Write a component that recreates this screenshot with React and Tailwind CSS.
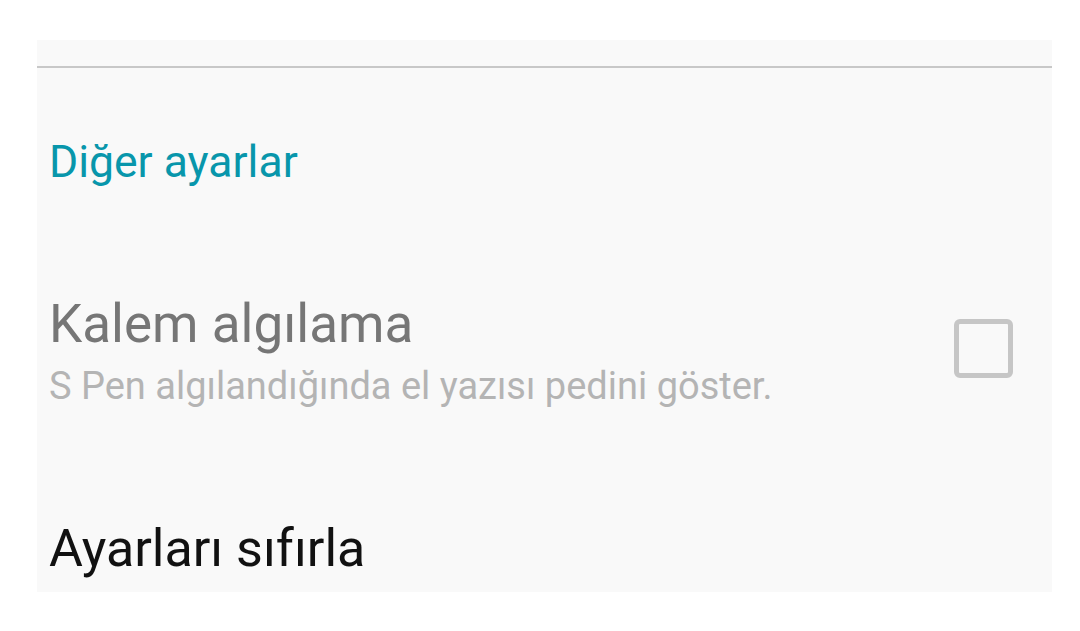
export default function App() {
  return (
    <div className="h-[631px] w-[1080px] bg-white pt-[40px] font-['Roboto',sans-serif]">
      <div className="ml-[37px] h-[552px] w-[1015px] overflow-hidden bg-[#f9f9f9]">
        <div className="h-[26px]" />
        <div className="h-[2px] bg-[#c8c8c8]" />

        <div className="pl-[12px] pt-[72px]">
          <div className="text-[44.5px] leading-[44px] text-[#0896ab]">Diğer ayarlar</div>
        </div>

        <div className="mt-[114px] flex items-start justify-between pl-[12px] pr-[39px]">
          <div>
            <div className="text-[53px] leading-[53px] text-[#767676]">Kalem algılama</div>
            <div className="mt-[16px] text-[38px] leading-[38px] text-[#b4b4b4]">
              S Pen algılandığında el yazısı pedini göster.
            </div>
          </div>
          <div className="mt-[21px] h-[59px] w-[59px] rounded-[6px] border-[5px] border-[#c6c6c6]" />
        </div>

        <div className="mt-[118px] pl-[12px]">
          <div className="text-[52px] leading-[52px] text-[#111111]">Ayarları sıfırla</div>
        </div>
      </div>
    </div>
  )
}
